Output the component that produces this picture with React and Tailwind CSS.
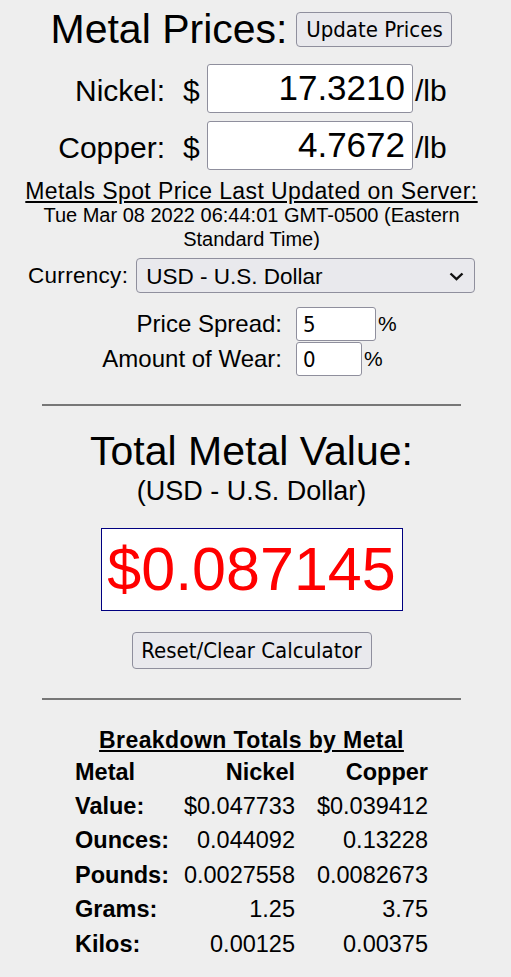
import React from "react";

const ctl = "font-['DejaVu_Sans_Condensed','DejaVu_Sans',sans-serif]";

const rows = [
    ["Value:", "$0.047733", "$0.039412"],
    ["Ounces:", "0.044092", "0.13228"],
    ["Pounds:", "0.0027558", "0.0082673"],
    ["Grams:", "1.25", "3.75"],
    ["Kilos:", "0.00125", "0.00375"],
];

function PriceRow({ label, value }) {
    return (
        <div className="flex items-center h-[49px]">
            <div className="w-[165px] text-right text-[30px] leading-[34px] pt-[4px]">{label}</div>
            <div className="w-[42px] pl-[18px] text-[30px] leading-[34px] pt-[4px]">$</div>
            <input
                type="text"
                readOnly
                value={value}
                className="w-[206px] h-[49px] bg-white border border-[#8f8f9d] rounded-[3px] text-right pr-[7px] text-[35px] font-['Liberation_Sans',Arial,sans-serif] outline-none"
            />
            <div className="ml-[2px] text-[30px] leading-[34px] pt-[4px]">/lb</div>
        </div>
    );
}

function SmallInput({ label, value, w }) {
    return (
        <div className="flex items-center h-[34px]">
            <div className="w-[282px] text-right text-[24px] leading-[28px]">{label}</div>
            <div
                className={`${ctl} ml-[14px] ${w} h-[34px] bg-white border border-[#8f8f9d] rounded-[3px] text-[22px] flex items-center pl-[6px]`}
            >
                {value}
            </div>
            <div className="text-[21px] ml-[2px]">%</div>
        </div>
    );
}

export default function App() {
    return (
        <div className="min-h-[977px] w-full bg-[#eeeeee] text-black font-['Liberation_Sans',Arial,sans-serif]">
            <div className="w-[503px] flex flex-col items-center">
                <div className="flex items-center gap-[9px] h-[46px] mt-[6px]">
                    <div className="text-[41px] leading-[46px]">Metal Prices:</div>
                    <button
                        className={`${ctl} w-[156px] h-[35px] text-[22px] bg-[#e9e9ed] border border-[#8f8f9d] rounded-[4px]`}
                    >
                        Update Prices
                    </button>
                </div>

                <div className="self-stretch flex flex-col gap-[8px] mt-[12px]">
                    <PriceRow label="Nickel:" value="17.3210" />
                    <PriceRow label="Copper:" value="4.7672" />
                </div>

                <div className="mt-[9px] text-[23px] leading-[24px] tracking-[0.4px] underline underline-offset-[2px]">
                    Metals Spot Price Last Updated on Server:
                </div>
                <div className="text-[20px] leading-[24px] text-center w-[460px]">
                    Tue Mar 08 2022 06:44:01 GMT-0500 (Eastern Standard Time)
                </div>

                <div className="self-stretch flex items-center gap-[8px] mt-[7px] ml-[28px]">
                    <div className="text-[22.5px] tracking-[0.3px]">Currency:</div>
                    <div className="relative w-[339px] h-[35px] bg-[#e9e9ed] border border-[#8f8f9d] rounded-[4px] flex items-center pl-[9px]">
                        <span className="text-[22.5px] pt-[2px]">USD - U.S. Dollar</span>
                        <svg
                            className="absolute right-[10px] top-[13px]"
                            width="15"
                            height="9"
                            viewBox="0 0 15 9"
                        >
                            <path d="M1.5 1.5 L7.5 7.2 L13.5 1.5" fill="none" stroke="#111" strokeWidth="2.4" />
                        </svg>
                    </div>
                </div>

                <div className="self-stretch flex flex-col mt-[14px] gap-[1px]">
                    <SmallInput label="Price Spread:" value="5" w="w-[80px]" />
                    <SmallInput label="Amount of Wear:" value="0" w="w-[66px]" />
                </div>

                <div className="w-[419px] h-[2px] bg-[#777777] mt-[28px]" />

                <div className="text-[41px] leading-[46px] mt-[22px]">Total Metal Value:</div>
                <div className="text-[27px] leading-[30px] mt-[2px]">(USD - U.S. Dollar)</div>

                <div className="mt-[22px] w-[302px] h-[83px] bg-white border border-[#000080] flex items-center justify-center">
                    <span className="text-[61px] leading-none text-[#ff0000]">$0.087145</span>
                </div>

                <button
                    className={`${ctl} mt-[21px] w-[240px] h-[37px] text-[22px] bg-[#e9e9ed] border border-[#8f8f9d] rounded-[4px]`}
                >
                    Reset/Clear Calculator
                </button>

                <div className="w-[419px] h-[2px] bg-[#777777] mt-[29px]" />

                <div className="mt-[28px] text-[23px] leading-[24px] tracking-[0.4px] font-bold underline underline-offset-[2px]">
                    Breakdown Totals by Metal
                </div>

                <div className="self-start ml-[75px] mt-[3px] text-[23.5px]">
                    <div className="flex h-[34.4px] items-center font-bold">
                        <div className="w-[100px]">Metal</div>
                        <div className="w-[120px] text-right">Nickel</div>
                        <div className="w-[133px] text-right">Copper</div>
                    </div>
                    {rows.map((r, i) => (
                        <div key={i} className="flex h-[34.4px] items-center">
                            <div className="w-[100px] font-bold">{r[0]}</div>
                            <div className="w-[120px] text-right">{r[1]}</div>
                            <div className="w-[133px] text-right">{r[2]}</div>
                        </div>
                    ))}
                </div>
            </div>
        </div>
    );
}
